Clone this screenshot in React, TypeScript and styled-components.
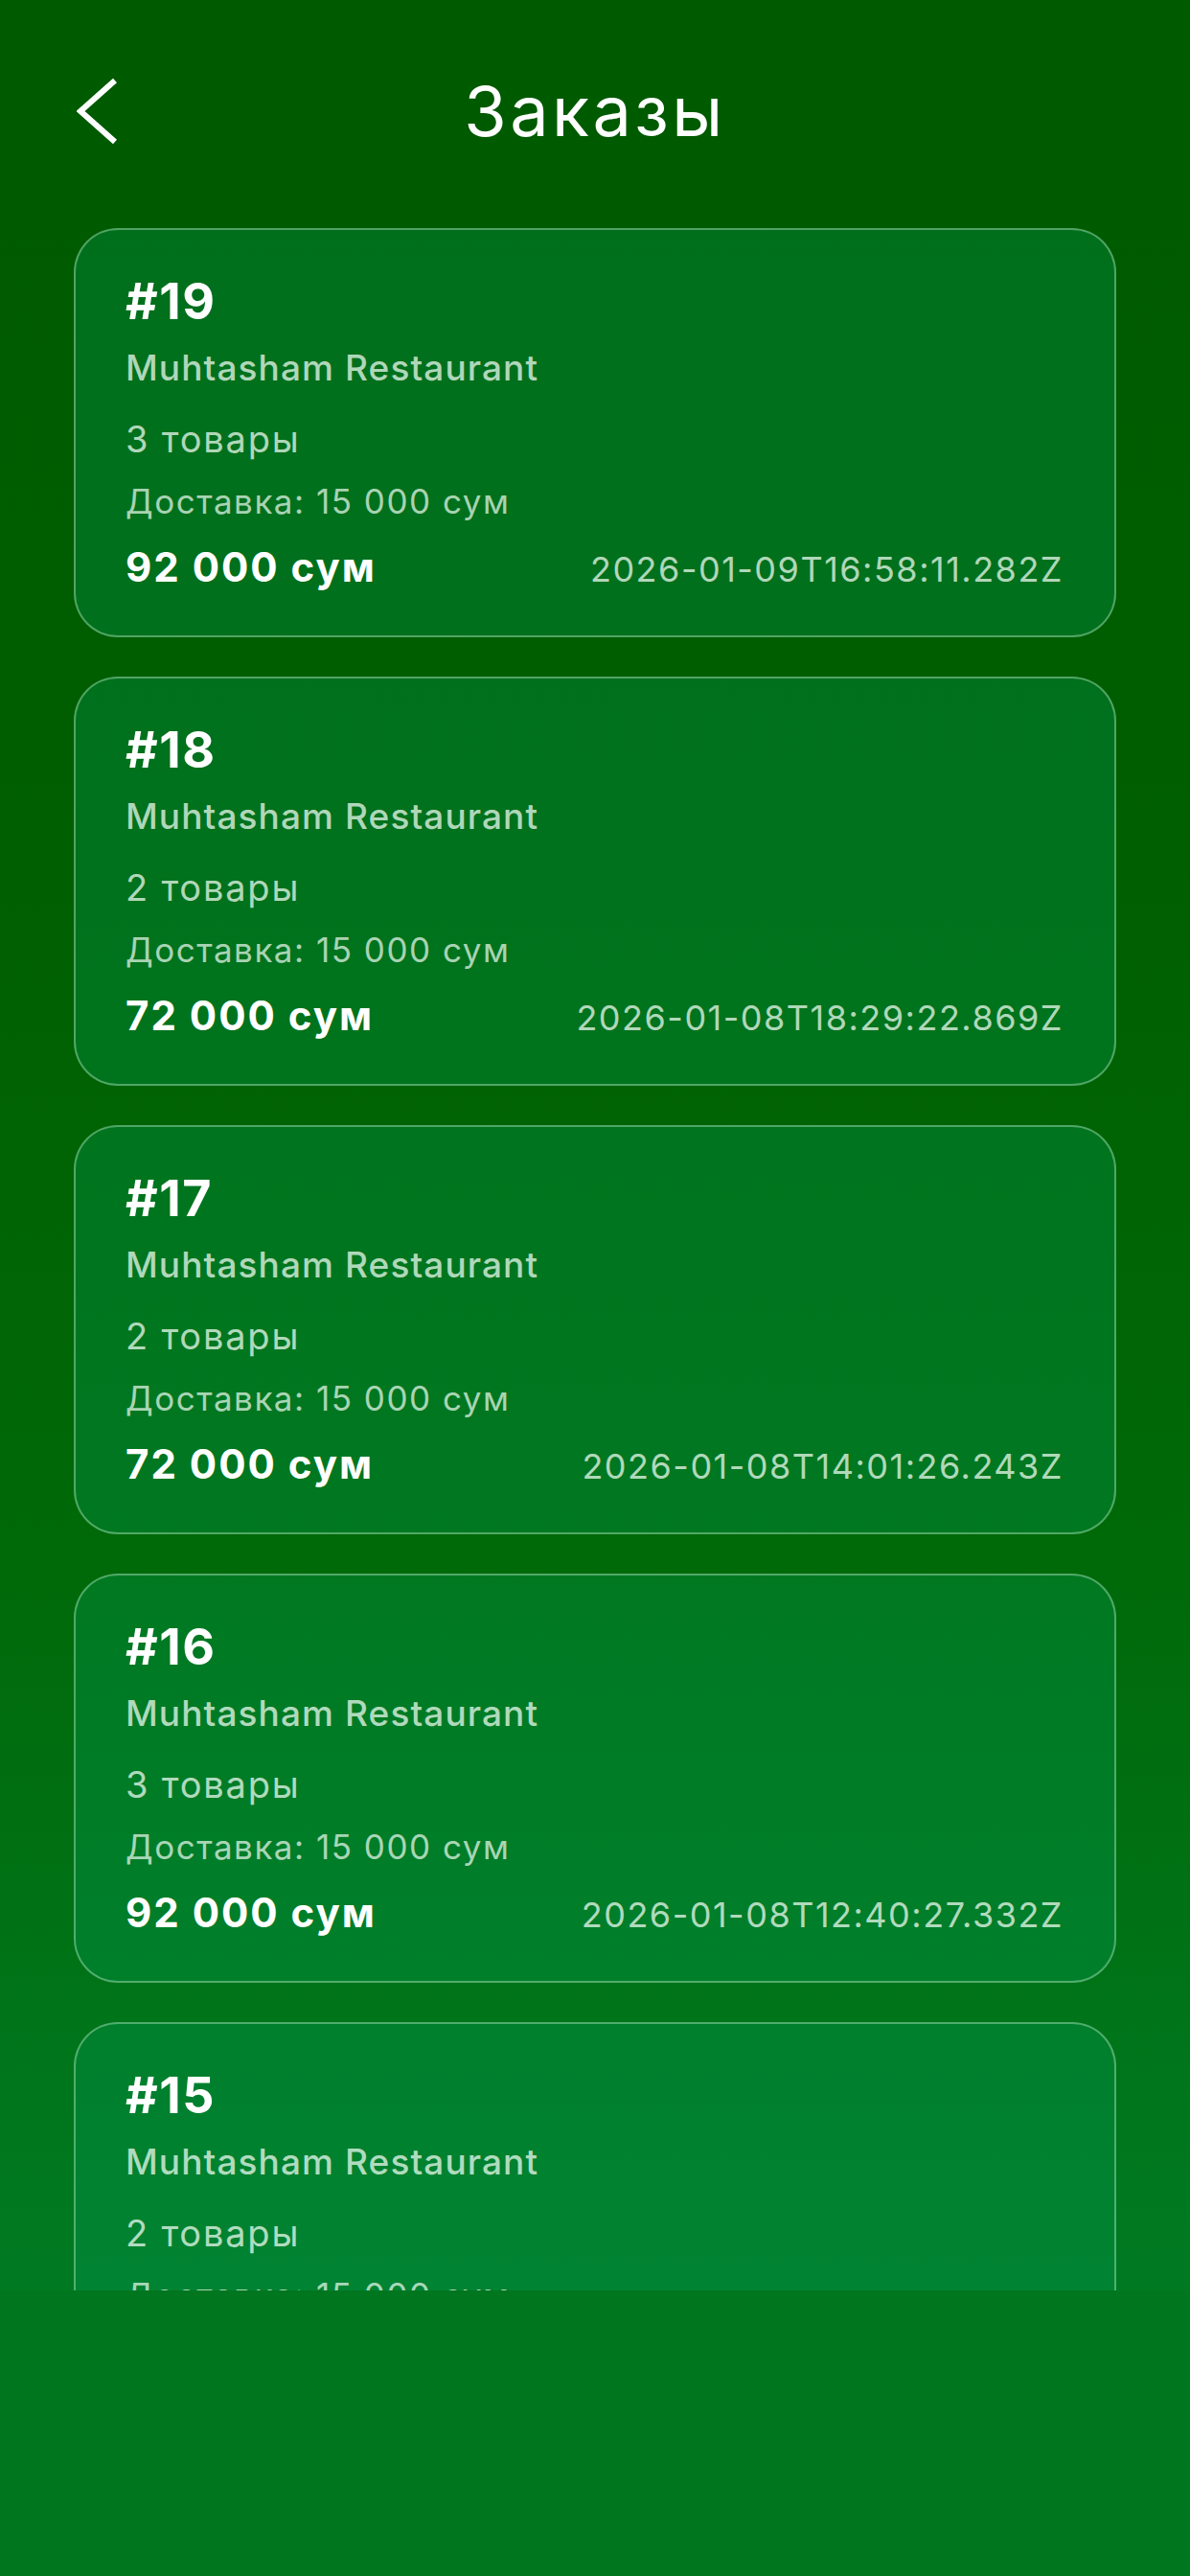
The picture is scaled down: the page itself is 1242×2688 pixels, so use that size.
import styled, { createGlobalStyle } from "styled-components";

const GlobalStyle = createGlobalStyle`
  html, body {
    margin: 0;
    padding: 0;
  }
  body {
    font-family: Inter, "Noto Sans", "Liberation Sans", sans-serif;
    background: #00761e;
    -webkit-font-smoothing: antialiased;
  }
  * {
    box-sizing: border-box;
  }
`;

type Order = {
  id: number;
  restaurant: string;
  count: number;
  delivery: string;
  total: string;
  createdAt: string;
};

const orders: Order[] = [
  { id: 19, restaurant: "Muhtasham Restaurant", count: 3, delivery: "15 000 сум", total: "92 000 сум", createdAt: "2026-01-09T16:58:11.282Z" },
  { id: 18, restaurant: "Muhtasham Restaurant", count: 2, delivery: "15 000 сум", total: "72 000 сум", createdAt: "2026-01-08T18:29:22.869Z" },
  { id: 17, restaurant: "Muhtasham Restaurant", count: 2, delivery: "15 000 сум", total: "72 000 сум", createdAt: "2026-01-08T14:01:26.243Z" },
  { id: 16, restaurant: "Muhtasham Restaurant", count: 3, delivery: "15 000 сум", total: "92 000 сум", createdAt: "2026-01-08T12:40:27.332Z" },
  { id: 15, restaurant: "Muhtasham Restaurant", count: 2, delivery: "15 000 сум", total: "72 000 сум", createdAt: "2026-01-08T10:12:05.114Z" },
];

const Page = styled.div`
  width: 1242px;
  height: 2688px;
  display: flex;
  flex-direction: column;
  overflow: hidden;
  background: linear-gradient(180deg, #005a00 0%, #005e00 30%, #006908 60%, #007a22 88%);
`;

const Header = styled.header`
  height: 232px;
  display: grid;
  grid-template-columns: 1fr auto 1fr;
  align-items: center;
  flex-shrink: 0;
`;

const BackButton = styled.button`
  justify-self: start;
  margin-left: 80px;
  padding: 0;
  border: none;
  background: none;
  display: flex;
  cursor: pointer;
`;

const Title = styled.h1`
  margin: 0;
  font-size: 72px;
  font-weight: 400;
  line-height: 1;
  color: #ffffff;
  letter-spacing: 3.4px;
`;

const List = styled.main`
  height: 2158px;
  flex-shrink: 0;
  overflow: hidden;
  padding: 6px 77px 0;
  display: flex;
  flex-direction: column;
  gap: 41px;
`;

const Card = styled.article`
  flex-shrink: 0;
  border: 2px solid rgba(190, 235, 200, 0.42);
  border-radius: 46px;
  background: rgba(0, 150, 80, 0.35);
  padding: 42px 53px 29px 52px;
  display: flex;
  flex-direction: column;
`;

const OrderNo = styled.div`
  font-size: 52px;
  font-weight: 700;
  line-height: 65px;
  letter-spacing: 1.5px;
  color: #ffffff;
`;

const Line = styled.div<{ $size: number; $lh: number; $ls: number; $weight?: number; $alpha?: number }>`
  font-size: ${(p) => p.$size}px;
  line-height: ${(p) => p.$lh}px;
  letter-spacing: ${(p) => p.$ls}px;
  font-weight: ${(p) => p.$weight ?? 400};
  color: rgba(235, 250, 238, ${(p) => p.$alpha ?? 0.75});
`;

const Bottom = styled.div`
  display: flex;
  justify-content: space-between;
  align-items: baseline;
  line-height: 79px;
`;

const Total = styled.span`
  font-size: 42px;
  font-weight: 700;
  letter-spacing: 2px;
  color: #ffffff;
`;

const Stamp = styled.span`
  font-size: 36px;
  letter-spacing: 1.5px;
  color: rgba(235, 250, 238, 0.75);
`;

const Footer = styled.div`
  flex: 1;
  background: #00761e;
`;

function Chevron() {
  return (
    <svg width="44" height="72" viewBox="0 0 44 72">
      <polyline
        points="40,4 4,36 40,68"
        fill="none"
        stroke="#ffffff"
        strokeWidth="6"
        strokeLinejoin="miter"
      />
    </svg>
  );
}

function OrderCard({ order }: { order: Order }) {
  return (
    <Card>
      <OrderNo>#{order.id}</OrderNo>
      <Line $size={37} $lh={74} $ls={1.1} $weight={500}>
        {order.restaurant}
      </Line>
      <Line $size={38} $lh={74} $ls={1.8}>
        {order.count} товары
      </Line>
      <Line $size={35} $lh={57} $ls={1.5} $alpha={0.72}>
        Доставка: {order.delivery}
      </Line>
      <Bottom>
        <Total>{order.total}</Total>
        <Stamp>{order.createdAt}</Stamp>
      </Bottom>
    </Card>
  );
}

function App() {
  return (
    <>
      <GlobalStyle />
      <Page>
        <Header>
          <BackButton aria-label="Назад">
            <Chevron />
          </BackButton>
          <Title>Заказы</Title>
          <span />
        </Header>
        <List>
          {orders.map((o) => (
            <OrderCard key={o.id} order={o} />
          ))}
        </List>
        <Footer />
      </Page>
    </>
  );
}

export default App;
